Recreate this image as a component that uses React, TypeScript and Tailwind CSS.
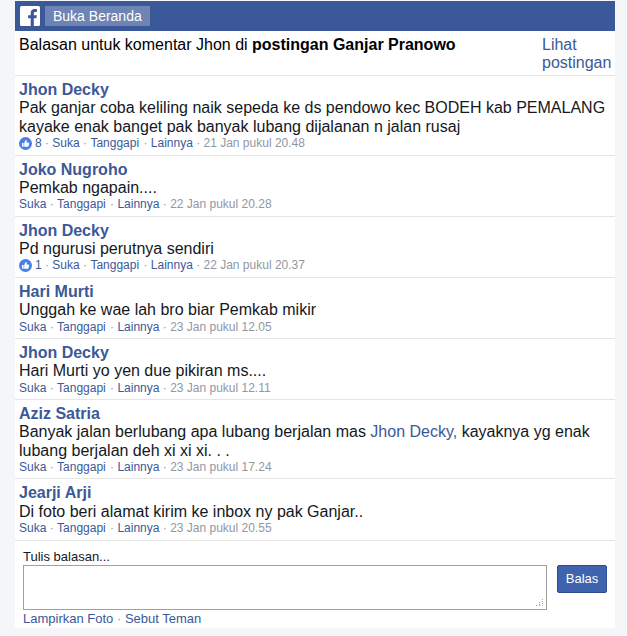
const F = "font-['Liberation_Sans',Arial,sans-serif]";

function Like() {
  return (
    <svg width="13" height="13" viewBox="0 0 13 13" className="shrink-0 mr-[3px]">
      <circle cx="6.5" cy="6.5" r="6.5" fill="#4a7fe8" />
      <path d="M3 6h1.6v3.8H3z M5.2 6l1.5-2.9c.7 0 1.1.5 1 1.2L7.5 5.6h1.9c.5 0 .8.4.7.9l-.5 2.6c-.1.4-.4.7-.8.7H5.2z" fill="#fff" />
    </svg>
  );
}

type C = { name: string; text: React.ReactNode; likes?: string; time: string };

const comments: C[] = [
  { name: "Jhon Decky", text: "Pak ganjar coba keliling naik sepeda ke ds pendowo kec BODEH kab PEMALANG kayake enak banget pak banyak lubang dijalanan n jalan rusaj", likes: "8", time: "21 Jan pukul 20.48" },
  { name: "Joko Nugroho", text: "Pemkab ngapain....", time: "22 Jan pukul 20.28" },
  { name: "Jhon Decky", text: "Pd ngurusi perutnya sendiri", likes: "1", time: "22 Jan pukul 20.37" },
  { name: "Hari Murti", text: "Unggah ke wae lah bro biar Pemkab mikir", time: "23 Jan pukul 12.05" },
  { name: "Jhon Decky", text: "Hari Murti yo yen due pikiran ms....", time: "23 Jan pukul 12.11" },
  { name: "Aziz Satria", text: <>Banyak jalan berlubang apa lubang berjalan mas <span className="text-[#3b5998]">Jhon Decky,</span> kayaknya yg enak lubang berjalan deh xi xi xi. . .</>, time: "23 Jan pukul 17.24" },
  { name: "Jearji Arji", text: "Di foto beri alamat kirim ke inbox ny pak Ganjar..", time: "23 Jan pukul 20.55" },
];

function Comment({ c }: { c: C }) {
  return (
    <div className="border-b border-[#e5e5e5] pl-1 pr-1 pt-[5px] pb-[4.3px]">
      <div className="text-[16px] leading-[18.4px] font-bold text-[#3b5998]">{c.name}</div>
      <div className="text-[16px] leading-[18.4px] text-[#141823]">{c.text}</div>
      <div className="flex h-[14px] items-center text-[12px] leading-[14px] whitespace-pre text-[#9197a3]">
        {c.likes && <><Like /><span className="text-[#3b5998]">{c.likes}</span><span> · </span></>}
        <span className="text-[#3b5998]">Suka</span><span> · </span>
        <span className="mr-px text-[#3b5998]">Tanggapi</span><span> · </span>
        <span className="text-[#3b5998]">Lainnya</span><span> · {c.time}</span>
      </div>
    </div>
  );
}

export default function App() {
  return (
    <div className={`${F} min-h-[636px] w-[627px] bg-[#f5f6f8] pt-px`}>
      <div className="ml-[15px] w-[600px] bg-white">
        <div className="flex h-[30px] items-center gap-[5px] bg-[#3b5998] pl-[5px]">
          <svg width="20" height="20" viewBox="0 0 20 20">
            <rect width="20" height="20" rx="1.5" fill="#fff" />
            <path d="M13.8 20v-7.7h2.6l.4-3h-3V7.4c0-.9.2-1.5 1.5-1.5h1.6V3.2c-.3 0-1.2-.1-2.3-.1-2.3 0-3.9 1.4-3.9 4v2.2H8.1v3h2.6V20z" fill="#3b5998" />
          </svg>
          <div className="flex h-[20px] items-center bg-[#6d84b4] px-2 text-[14px] text-white">Buka Beranda</div>
        </div>
        <div className="flex h-[45px] border-b border-[#e5e5e5] pl-1 pr-1 pt-[5px] text-[16px] leading-[18.4px]">
          <div className="flex-1 text-black">Balasan untuk komentar Jhon di <b>postingan Ganjar Pranowo</b></div>
          <div className="w-[69px] shrink-0 text-[#3b5998]">Lihat postingan</div>
        </div>
        {comments.map((c, i) => <Comment key={i} c={c} />)}
        <div className="pl-2 pr-2 pt-[8px]">
          <div className="text-[13px] leading-[16px] text-[#141823]">Tulis balasan...</div>
          <div className="flex items-start gap-[10px]">
            <div className="relative h-[45px] w-[524px] border border-[#a0a0a0] bg-white">
              <svg width="10" height="10" viewBox="0 0 10 10" className="absolute bottom-[1px] right-[1px]">
                <g fill="#aaa">
                  <rect x="7" y="1" width="1" height="1" /><rect x="7" y="3" width="1" height="1" />
                  <rect x="4" y="4" width="1" height="1" /><rect x="7" y="5" width="1" height="1" />
                  <rect x="4" y="6" width="1" height="1" /><rect x="1" y="7" width="1" height="1" />
                  <rect x="4" y="7" width="1" height="1" /><rect x="7" y="7" width="1" height="1" />
                </g>
              </svg>
            </div>
            <button className="flex h-[28px] w-[50px] items-center justify-center rounded-[2px] border border-[#2f4c8f] bg-[#3f63ad] text-[13px] text-white">Balas</button>
          </div>
          <div className="h-[18px] text-[13px] leading-[18px] whitespace-pre text-[#9197a3]">
            <span className="text-[#3b5998]">Lampirkan Foto</span> · <span className="text-[#3b5998]">Sebut Teman</span>
          </div>
        </div>
      </div>
    </div>
  );
}
